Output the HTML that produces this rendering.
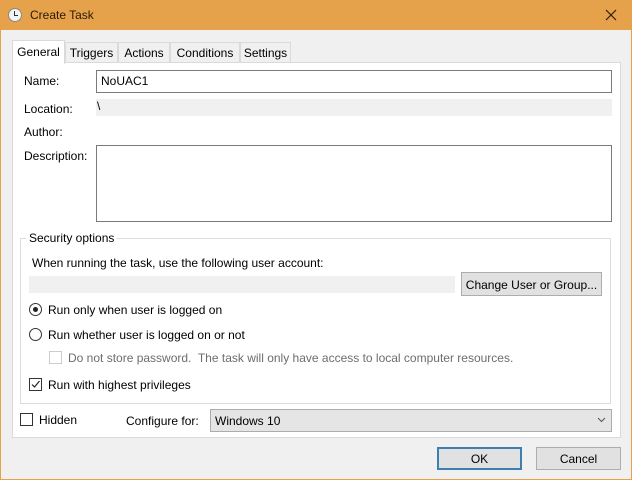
<!DOCTYPE html>
<html><head><meta charset="utf-8"><style>
*{margin:0;padding:0;box-sizing:border-box}
body{width:632px;height:480px;background:#e6a24a;font-family:"Liberation Sans",sans-serif;font-size:12px;color:#000;position:relative;overflow:hidden}
.a{position:absolute}
#win{left:1px;top:30px;width:630px;height:449px;background:#f0f0f0}
#panel{left:12px;top:62px;width:609px;height:376px;background:#fff;border:1px solid #dadada}
.tab{top:42px;height:21px;background:#f0f0f0;border:1px solid #dadada;border-bottom:none;padding-top:3px;text-align:center}
.inp{border:1px solid #7a7a7a;background:#fff}
.btn{background:#e1e1e1;border:1px solid #adadad;text-align:center}
.cb{width:13px;height:13px;border:1px solid #333;background:#fff}
.rb{width:13px;height:13px;border:1px solid #333;border-radius:50%;background:#fff}
</style></head><body>
<div class="a" style="left:8px;top:8px;width:14px;height:14px;border-radius:50%;background:#f4f4f4;border:1px solid #888"></div>
<div class="a" style="left:14px;top:11px;width:1px;height:5px;background:#333"></div>
<div class="a" style="left:14px;top:15px;width:4px;height:1px;background:#333"></div>
<div class="a" style="left:30px;top:8px;font-size:12px;color:#2a1a0a">Create Task</div>
<svg class="a" style="left:605px;top:9px" width="12" height="12"><path d="M1 1L11 11M11 1L1 11" stroke="#2a1a0a" stroke-width="1.2"/></svg>
<div class="a" id="win"></div>
<div class="a tab" style="left:12px;top:40px;width:53px;height:24px;background:#fff;z-index:2;padding-top:4px">General</div>
<div class="a tab" style="left:65px;width:53px">Triggers</div>
<div class="a tab" style="left:118px;width:52px">Actions</div>
<div class="a tab" style="left:170px;width:70px">Conditions</div>
<div class="a tab" style="left:240px;width:51px">Settings</div>
<div class="a" id="panel"></div>
<div class="a" style="left:24px;top:74px">Name:</div>
<div class="a inp" style="left:96px;top:70px;width:516px;height:23px;padding:3px 4px">NoUAC1</div>
<div class="a" style="left:24px;top:102px">Location:</div>
<div class="a" style="left:96px;top:99px;width:516px;height:17px;background:#f0f0f0;padding-left:1px">\</div>
<div class="a" style="left:24px;top:125px">Author:</div>
<div class="a" style="left:24px;top:149px">Description:</div>
<div class="a inp" style="left:96px;top:145px;width:516px;height:77px"></div>
<div class="a" style="left:20px;top:238px;width:591px;height:166px;border:1px solid #dcdcdc"></div>
<div class="a" style="left:26px;top:231px;background:#fff;padding:0 3px">Security options</div>
<div class="a" style="left:32px;top:256px">When running the task, use the following user account:</div>
<div class="a" style="left:29px;top:276px;width:426px;height:17px;background:#f0f0f0"></div>
<div class="a btn" style="left:461px;top:272px;width:141px;height:24px;padding-top:5px">Change User or Group...</div>
<div class="a rb" style="left:29px;top:303px"></div>
<div class="a" style="left:33px;top:307px;width:5px;height:5px;border-radius:50%;background:#222"></div>
<div class="a" style="left:48px;top:303px">Run only when user is logged on</div>
<div class="a rb" style="left:29px;top:328px"></div>
<div class="a" style="left:48px;top:328px">Run whether user is logged on or not</div>
<div class="a cb" style="left:49px;top:351px;border-color:#ccc"></div>
<div class="a" style="left:68px;top:351px;color:#6d6d6d">Do not store password.&nbsp; The task will only have access to local computer resources.</div>
<div class="a cb" style="left:29px;top:378px"></div>
<svg class="a" style="left:29px;top:378px" width="13" height="13"><path d="M3 6.5L5.5 9L10.5 3" stroke="#222" stroke-width="1.2" fill="none"/></svg>
<div class="a" style="left:48px;top:378px">Run with highest privileges</div>
<div class="a cb" style="left:20px;top:413px"></div>
<div class="a" style="left:39px;top:413px">Hidden</div>
<div class="a" style="left:126px;top:414px">Configure for:</div>
<div class="a" style="left:210px;top:409px;width:402px;height:23px;background:#e5e5e5;border:1px solid #acacac;padding:4px 4px">Windows 10</div>
<svg class="a" style="left:597px;top:417px" width="9" height="6"><path d="M1 1L4.5 4.5L8 1" stroke="#555" fill="none"/></svg>
<div class="a btn" style="left:437px;top:447px;width:85px;height:23px;border:2px solid #3c7fb1;padding-top:3px">OK</div>
<div class="a btn" style="left:536px;top:447px;width:85px;height:23px;padding-top:4px">Cancel</div>
</body></html>
